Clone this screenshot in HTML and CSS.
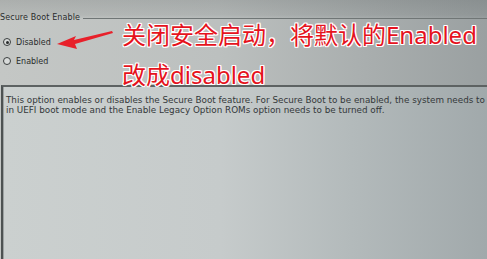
FILE: index.html
```html
<!DOCTYPE html>
<html lang="zh-CN">
<head>
    <meta charset="UTF-8">
    <title>Secure Boot Enable</title>
    <link rel="stylesheet" href="styles.css">
</head>
<body>
    <div class="screen">
        <div class="setting">
            <div class="legend">
                <span class="legend-text">Secure Boot Enable</span>
                <span class="rule"></span>
            </div>
            <div class="radio-list">
                <div class="option">
                    <span class="radio checked"></span>
                    <span>Disabled</span>
                </div>
                <div class="option">
                    <span class="radio"></span>
                    <span>Enabled</span>
                </div>
            </div>
        </div>

        <div class="help">
            <p>This option enables or disables the Secure Boot feature. For Secure Boot to be enabled, the system needs to be</p>
            <p>in UEFI boot mode and the Enable Legacy Option ROMs option needs to be turned off.</p>
        </div>

        <!-- red annotation over the photo -->
        <svg class="arrow" width="487" height="60" viewBox="0 0 487 60">
            <polygon points="57,44 76,36 74,40 112,31 113,33 75,44 77,49" fill="#e8202a"/>
        </svg>
        <div class="note">
            <div>关闭安全启动，将默认的Enabled</div>
            <div>改成disabled</div>
        </div>
    </div>
</body>
</html>
```

FILE: styles.css
```css
body {
    margin: 0;
    background-color: #b4b8b8;
}

.screen {
    position: relative;
    width: 487px;
    height: 259px;
    overflow: hidden;
    display: flex;
    flex-direction: column;
    font-family: "DejaVu Sans", sans-serif;
    color: #2a2c2c;
    background:
        linear-gradient(180deg, rgba(60, 66, 66, 0.18) 0, rgba(60, 66, 66, 0.1) 15px, transparent 19px),
        linear-gradient(90deg, #c4c7c5 0, #bcc0bf 45%, #a9aeae 75%, #9aa0a1 100%);
}

.setting {
    height: 85px;
    padding-top: 12px;
    box-sizing: border-box;
}

.legend {
    display: flex;
    align-items: center;
    font-size: 8px;
    height: 11px;
}

.legend-text {
    letter-spacing: 0.1px;
}

.rule {
    flex: 1;
    height: 1px;
    margin-left: 3px;
    margin-top: 1px;
    background-color: #707676;
}

.radio-list {
    margin-top: 14px;
    padding-left: 3px;
    display: flex;
    flex-direction: column;
    gap: 9px;
}

.option {
    display: flex;
    align-items: center;
    gap: 5px;
    height: 10px;
    font-size: 8px;
}

.radio {
    width: 6px;
    height: 6px;
    border: 1px solid #3a3e3e;
    border-radius: 50%;
    background-color: #d8dbda;
    display: flex;
    align-items: center;
    justify-content: center;
}

.radio.checked::after {
    content: '';
    width: 3px;
    height: 3px;
    border-radius: 50%;
    background-color: #2a2c2c;
}

.help {
    flex: 1;
    margin-left: 1px;
    border-top: 2px solid #5d6262;
    border-left: 2px solid #4d5252;
    box-shadow: inset 1px 0 0 #9da2a2;
    padding: 8px 0 0 3px;
    font-size: 8.8px;
    line-height: 10px;
    color: #34383a;
    white-space: nowrap;
    overflow: hidden;
    background: linear-gradient(90deg, #cbd0cf 0, #c6cbcb 45%, #b3babb 72%, #a1a9ab 100%);
}

.help p {
    margin: 0;
}

.arrow {
    position: absolute;
    left: 0;
    top: 0;
}

.note {
    position: absolute;
    left: 122px;
    top: 15px;
    font-family: "Noto Sans", "Noto Sans CJK SC", sans-serif;
    font-size: 24px;
    line-height: 40px;
    color: #e5131d;
    white-space: nowrap;
    text-shadow:
        1px 0 0 #fff, -1px 0 0 #fff, 0 1px 0 #fff, 0 -1px 0 #fff,
        1px 1px 0 #fff, -1px -1px 0 #fff, 1px -1px 0 #fff, -1px 1px 0 #fff;
}
```
